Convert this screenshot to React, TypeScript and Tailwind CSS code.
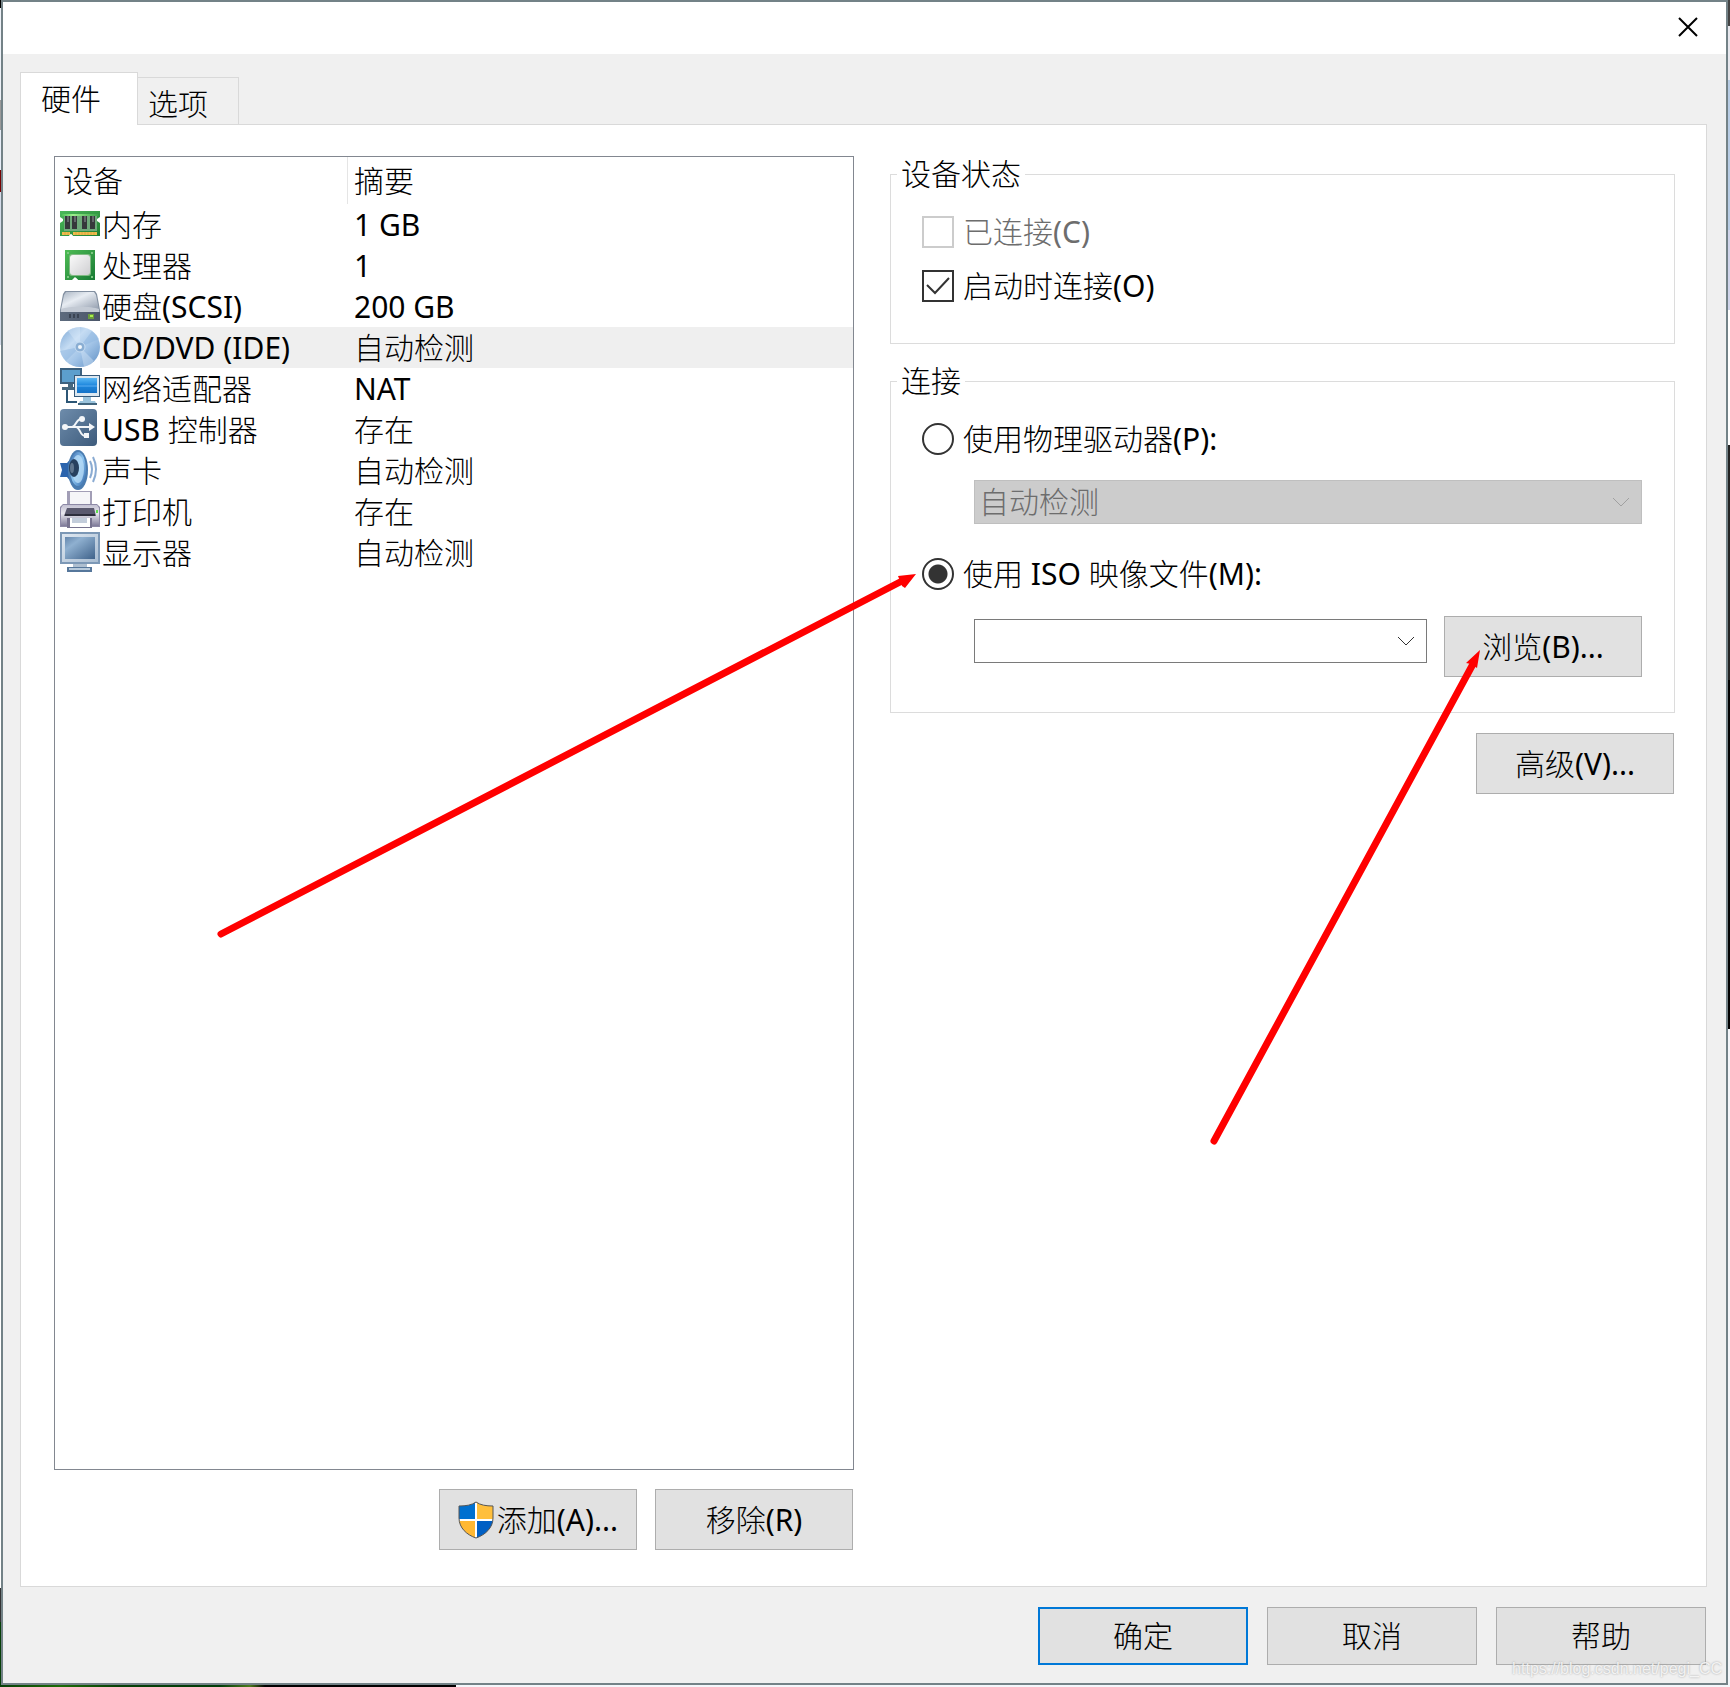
import { useState } from "react";
import type { ReactNode } from "react";

interface Device {
  id: string;
  name: string;
  summary: string;
  icon: ReactNode;
}

const MemoryIcon = () => (
  <svg width="40" height="40" viewBox="0 0 40 40">
    <defs>
      <linearGradient id="mem" x1="0" y1="0" x2="1" y2="1">
        <stop offset="0" stopColor="#4cb85a" />
        <stop offset="1" stopColor="#1f7f32" />
      </linearGradient>
      <linearGradient id="memTop" x1="0" y1="0" x2="1" y2="0">
        <stop offset="0" stopColor="#4dc057" />
        <stop offset="0.3" stopColor="#9ff08e" />
        <stop offset="1" stopColor="#3aa349" />
      </linearGradient>
    </defs>
    <path d="M0 7h40v6l-3 2v2l3 2v13H13l-2-2-2 2H0V19l3-2v-2l-3-2z" fill="url(#mem)" />
    <path d="M2 10h36v2H2z" fill="url(#memTop)" />
    <path d="M4 12h33v15H4z" fill="#6faa7b" />
    <g fill="#36383b">
      <path d="M5 12h5v13H5zM12 12h5v13h-5zM22 12h5v13h-5zM30 12h5v13h-5z" />
    </g>
    <g fill="#63666a">
      <path d="M7 12h2v6H7zM14 12h2v6h-2zM24 12h2v6h-2zM32 12h2v6h-2z" />
    </g>
    <path d="M2 28h8v3H2zM13 28h24v3H13z" fill="#efbd4c" />
    <path d="M5 28v3M8 28v3M16 28v3M19 28v3M22 28v3M25 28v3M28 28v3M31 28v3M34 28v3" stroke="#dba345" />
    <path d="m11 30 3 3H8z" fill="#fff" />
  </svg>
);

const CpuIcon = () => (
  <svg width="40" height="40" viewBox="0 0 40 40">
    <defs>
      <linearGradient id="cpu" x1="0" y1="0" x2="1" y2="1">
        <stop offset="0" stopColor="#4fbd55" />
        <stop offset="1" stopColor="#187a34" />
      </linearGradient>
      <linearGradient id="die" x1="0" y1="0" x2="1" y2="1">
        <stop offset="0" stopColor="#fafafa" />
        <stop offset="1" stopColor="#cfcfd2" />
      </linearGradient>
    </defs>
    <path d="M5 5h30v30H18l-2-2-2 2H5z" fill="url(#cpu)" />
    <path d="M7 7h2v2H7zM31 7h2v2h-2zM31 31h2v2h-2zM7 31h2v2H7z" fill="#7cc781" />
    <rect x="9" y="9" width="22" height="22" rx="3" fill="#7fba82" />
    <rect x="10" y="10" width="20" height="20" rx="3" fill="url(#die)" />
    <path d="m15 32 3 3h-6z" fill="#fff" />
  </svg>
);

const DiskIcon = () => (
  <svg width="40" height="40" viewBox="0 0 40 40">
    <defs>
      <linearGradient id="hdd" x1="0" y1="0" x2="1" y2="1">
        <stop offset="0" stopColor="#a9b4c2" />
        <stop offset="0.4" stopColor="#e7ecf2" />
        <stop offset="1" stopColor="#8f9aab" />
      </linearGradient>
      <linearGradient id="hddFront" x1="0" y1="0" x2="1" y2="0">
        <stop offset="0" stopColor="#5d6b7e" />
        <stop offset="1" stopColor="#4a5568" />
      </linearGradient>
    </defs>
    <path d="M5 5h30l2 3 3 16v11H0V24L3 8z" fill="#8390a1" />
    <path d="M6 6h28l2 3 3 15H1L4 9z" fill="url(#hdd)" />
    <path d="M1 23c8-3 30-3 38 0v3H1z" fill="#c3cad4" />
    <path d="M0 26h40v9H0z" fill="url(#hddFront)" />
    <path d="M9 28h2v4H9zM13 28h2v4h-2zM17 28h2v4h-2z" fill="#3a4453" />
    <path d="M28 28h6v5h-6z" fill="#6a9a3f" />
    <path d="M30 29h3v2h-3z" fill="#a8f04c" />
  </svg>
);

const DiscIcon = () => (
  <svg width="40" height="40" viewBox="0 0 40 40">
    <defs>
      <linearGradient id="disc" x1="0" y1="0" x2="1" y2="1">
        <stop offset="0" stopColor="#7aa6d4" />
        <stop offset="0.35" stopColor="#c5dcf3" />
        <stop offset="0.6" stopColor="#a2c4e7" />
        <stop offset="1" stopColor="#5f8fc4" />
      </linearGradient>
    </defs>
    <circle cx="20" cy="20" r="20" fill="url(#disc)" />
    <path d="M20 20 8 4a20 20 0 0 1 12-4zM20 20l14 14a20 20 0 0 1-10 6z" fill="#dcebfa" opacity="0.4" />
    <path d="M20 20 0 24a20 20 0 0 0 6 10zM20 20l19-8a20 20 0 0 0-7-8z" fill="#8db6e0" opacity="0.5" />
    <circle cx="20" cy="20" r="5" fill="#8aaed3" stroke="#c9def3" strokeWidth="1" />
    <circle cx="20" cy="20" r="2" fill="#f4f8fc" />
  </svg>
);

const NetworkIcon = () => (
  <svg width="40" height="40" viewBox="0 0 40 40">
    <defs>
      <linearGradient id="net" x1="0" y1="0" x2="0" y2="1">
        <stop offset="0" stopColor="#5bb8f5" />
        <stop offset="0.5" stopColor="#1c86dc" />
        <stop offset="1" stopColor="#1673c8" />
      </linearGradient>
    </defs>
    <path d="M0 0h22v16H0z" fill="#3c617f" />
    <path d="M2 2h18v12H2z" fill="#5c9fcd" />
    <path d="M8 16h5v4H8zM2 19h12v3H2z" fill="#47687f" />
    <path d="M7 22v12h10" fill="none" stroke="#2c5675" strokeWidth="2" />
    <path d="M14 7h26v22H14z" fill="#35597a" />
    <path d="M15 8h24v20H15z" fill="#dbe7f0" />
    <path d="M17 10h20v15H17z" fill="url(#net)" />
    <path d="M17 17h20v2H17z" fill="#54a9ef" opacity="0.6" />
    <path d="M23 29h8v4h4l2 4H18l2-4h3z" fill="#9ac3dc" />
    <path d="M18 35h19v2H18z" fill="#42667f" />
  </svg>
);

const UsbIcon = () => (
  <svg width="40" height="40" viewBox="0 0 40 40">
    <defs>
      <linearGradient id="usb" x1="0" y1="0" x2="1" y2="1">
        <stop offset="0" stopColor="#6e8cab" />
        <stop offset="1" stopColor="#3d5b7c" />
      </linearGradient>
    </defs>
    <rect width="37" height="37" rx="4" fill="url(#usb)" />
    <g fill="none" stroke="#f3f6f9" strokeWidth="2">
      <path d="M5 18h25M12 18c4 0 4-8 9-8M16 18c4 0 4 9 9 9" />
    </g>
    <circle cx="5" cy="18" r="3" fill="#f3f6f9" />
    <circle cx="22" cy="10" r="3" fill="#f3f6f9" />
    <path d="M24 24h5v5h-5zM29 14l6 4-6 4z" fill="#f3f6f9" />
  </svg>
);

const SoundIcon = () => (
  <svg width="40" height="40" viewBox="0 0 40 40">
    <defs>
      <linearGradient id="snd" x1="0" y1="0" x2="1" y2="1">
        <stop offset="0" stopColor="#3c6fb0" />
        <stop offset="0.5" stopColor="#8cc4f0" />
        <stop offset="1" stopColor="#2c62a5" />
      </linearGradient>
    </defs>
    <path d="M0 13h7L17 1v38L7 27H0l2-7z" fill="#2b64ad" />
    <ellipse cx="18" cy="20" rx="10" ry="20" fill="#4a7cb0" />
    <ellipse cx="18" cy="19" rx="8" ry="17" fill="url(#snd)" />
    <ellipse cx="18" cy="19" rx="6" ry="14" fill="#b6dcf7" opacity="0.8" />
    <ellipse cx="14" cy="18" rx="5" ry="9" fill="#27405f" />
    <ellipse cx="12" cy="18" rx="2" ry="5" fill="#60768f" />
    <path d="M30 11q4 8 0 17M33 7q6 12 0 25" fill="none" stroke="#8aabd2" strokeWidth="2" />
  </svg>
);

const PrinterIcon = () => (
  <svg width="40" height="40" viewBox="0 0 40 40">
    <defs>
      <linearGradient id="prn" x1="0" y1="0" x2="0" y2="1">
        <stop offset="0" stopColor="#c3c1d2" />
        <stop offset="0.4" stopColor="#e8e7ee" />
        <stop offset="1" stopColor="#7f7b99" />
      </linearGradient>
    </defs>
    <path d="M7 0h25v14H7z" fill="#a29eb6" />
    <path d="M10 1h20v13H10z" fill="#f5f5f8" />
    <path d="M3 13h34l3 3v20H0V16z" fill="#8d89a6" />
    <path d="M3 14h34l2 3v18H1V17z" fill="url(#prn)" />
    <path d="M7 17h27l2 8H4z" fill="#5a596e" />
    <path d="M5 23h30v2H5z" fill="#2e2f3d" />
    <path d="M36 19h2v3h-2z" fill="#5ee04d" />
    <path d="M7 27h25v10H7z" fill="#77738f" />
    <path d="M10 27h20v9H10z" fill="#fff" />
    <path d="M12 27h15v5H12z" fill="#c3cddb" />
  </svg>
);

const DisplayIcon = () => (
  <svg width="40" height="40" viewBox="0 0 40 40">
    <defs>
      <linearGradient id="dsp" x1="0" y1="0" x2="1" y2="1">
        <stop offset="0" stopColor="#6587ad" />
        <stop offset="0.3" stopColor="#8fb0d0" />
        <stop offset="1" stopColor="#3f628a" />
      </linearGradient>
      <linearGradient id="dspFrame" x1="0" y1="0" x2="1" y2="1">
        <stop offset="0" stopColor="#dfe8f1" />
        <stop offset="1" stopColor="#a9bdd2" />
      </linearGradient>
    </defs>
    <path d="M0 0h40v32H0z" fill="#7c98b6" />
    <path d="M2 2h36v28H2z" fill="url(#dspFrame)" />
    <path d="M5 5h30v22H5z" fill="url(#dsp)" />
    <path d="M13 32h14v3H13z" fill="#aebfd0" />
    <path d="M7 35h25v5H7z" fill="#56779b" />
    <path d="M9 36h21v2H9z" fill="#b9cbdc" />
  </svg>
);

const ShieldIcon = () => (
  <svg width="36" height="38" viewBox="0 0 36 38">
    <defs>
      <clipPath id="shieldClip">
        <path d="M18 1c4 3 10 4 17 4v12c0 10-8 17-17 20C9 34 1 27 1 17V5c7 0 13-1 17-4z" />
      </clipPath>
    </defs>
    <g clipPath="url(#shieldClip)">
      <path d="M0 0h18v19H0z" fill="#0070d0" />
      <path d="M18 0h18v19H18z" fill="#ffbf3c" />
      <path d="M0 19h18v19H0z" fill="#ffb833" />
      <path d="M18 19h18v19H18z" fill="#005fc4" />
      <path d="M18 0v38M0 19h36" stroke="#fff" strokeWidth="2" />
    </g>
    <path
      d="M18 1c4 3 10 4 17 4v12c0 10-8 17-17 20C9 34 1 27 1 17V5c7 0 13-1 17-4z"
      fill="none"
      stroke="#555"
    />
  </svg>
);

const Chevron = () => (
  <svg
    width="18"
    height="10"
    viewBox="0 0 18 10"
    fill="none"
    stroke="currentColor"
    className="pointer-events-none absolute right-3 top-1/2 -translate-y-1/2"
  >
    <path d="m1 1 8 8 8-8" />
  </svg>
);

const devices: Device[] = [
  { id: "memory", name: "内存", summary: "1 GB", icon: <MemoryIcon /> },
  { id: "cpu", name: "处理器", summary: "1", icon: <CpuIcon /> },
  { id: "disk", name: "硬盘(SCSI)", summary: "200 GB", icon: <DiskIcon /> },
  { id: "cd", name: "CD/DVD (IDE)", summary: "自动检测", icon: <DiscIcon /> },
  { id: "network", name: "网络适配器", summary: "NAT", icon: <NetworkIcon /> },
  { id: "usb", name: "USB 控制器", summary: "存在", icon: <UsbIcon /> },
  { id: "sound", name: "声卡", summary: "自动检测", icon: <SoundIcon /> },
  { id: "printer", name: "打印机", summary: "存在", icon: <PrinterIcon /> },
  { id: "display", name: "显示器", summary: "自动检测", icon: <DisplayIcon /> },
];

const buttonStyle =
  "flex h-[61px] w-[198px] shrink-0 items-center justify-center border border-[#adadad] bg-[#e1e1e1]";
const radioStyle =
  "size-8 shrink-0 appearance-none rounded-full border-2 border-[#333] checked:bg-[radial-gradient(circle,#333_9px,transparent_10px)]";

const DeviceTable = ({ selected, onSelect }: { selected: string; onSelect: (id: string) => void }) => (
  <table className="w-full table-fixed border-collapse text-left">
    <thead>
      <tr className="h-[47px]">
        <th className="w-[293px] p-0 font-normal">
          <div className="border-r border-[#e5e5e5] pl-2 leading-[47px]">设备</div>
        </th>
        <th className="p-0 pl-[6px] font-normal leading-[47px]">摘要</th>
      </tr>
    </thead>
    <tbody>
      {devices.map(({ id, name, summary, icon }) => (
        <tr key={id} className="h-[41px]" onClick={() => onSelect(id)}>
          <td className="p-0 pl-[5px]">
            <div className="flex h-[41px]">
              {icon}
              <span className={`flex-1 pl-[2px] leading-[41px] ${id === selected ? "bg-[#efefef]" : ""}`}>
                {name}
              </span>
            </div>
          </td>
          <td className={`p-0 pl-[6px] leading-[41px] ${id === selected ? "bg-[#efefef]" : ""}`}>{summary}</td>
        </tr>
      ))}
    </tbody>
  </table>
);

const Arrows = () => (
  <svg
    width="1730"
    height="1687"
    viewBox="0 0 1730 1687"
    className="pointer-events-none absolute left-0 top-0"
    fill="#f00"
  >
    <path d="M221 934 902 581M1214 1141 1473 664" stroke="#f00" strokeWidth="7" strokeLinecap="round" />
    <path d="m916 574-18 2 2 5 2 5 3 2zM1480 650l-14 13 5 1 3 2 3 2z" />
  </svg>
);

export default function App() {
  const [selected, setSelected] = useState("cd");
  const [source, setSource] = useState("iso");

  return (
    <div className="relative flex min-h-screen flex-col overflow-hidden bg-[#f4f6fa] font-['Noto_Sans','Noto_Sans_CJK_SC_Light','Noto_Sans_CJK_SC',sans-serif] text-[30px] font-normal leading-9 text-black">
      <div className="flex flex-1">
        <div className="w-px bg-[linear-gradient(#000_0_8px,#eef2f8_8px_100px,#999_100px_130px,#e8eef8_130px_170px,#700_170px_192px,#d5dcea_192px_345px,#fff_345px_1588px,#333_1588px_1622px,#063f06_1622px)]" />
        <div className="flex min-w-0 flex-1 flex-col border-2 border-[#738287] bg-[#f0f0f0]">
          <header className="flex h-[52px] justify-end bg-white">
            <button type="button" aria-label="关闭" className="flex w-[76px] items-center justify-center pb-0.5">
              <svg width="20" height="20" viewBox="0 0 20 20" stroke="#000" strokeWidth="2">
                <path d="m1 1 18 18M19 1 1 19" />
              </svg>
            </button>
          </header>

          <main className="flex flex-1 flex-col pb-[18px] pl-[17px] pr-[19px] pt-[18px]">
            <div role="tablist" className="flex items-end">
              <button
                type="button"
                role="tab"
                aria-selected="true"
                className="relative -mb-px h-[53px] w-[118px] border border-b-0 border-[#d9d9d9] bg-white pl-5 text-left"
              >
                硬件
              </button>
              <button
                type="button"
                role="tab"
                aria-selected="false"
                className="h-[47px] w-[101px] border border-b-0 border-l-0 border-[#d9d9d9] pl-[10px] pt-1.5 text-left"
              >
                选项
              </button>
            </div>

            <div className="grid flex-1 grid-cols-[800fr_785fr] gap-9 border border-[#d9d9d9] bg-white pb-9 pl-[33px] pr-[31px] pt-[31px]">
              <section className="flex flex-col">
                <div className="flex-1 border border-[#828790]">
                  <DeviceTable selected={selected} onSelect={setSelected} />
                </div>
                <div className="mt-[19px] flex justify-end gap-[18px] pr-px">
                  <button type="button" className={buttonStyle}>
                    <ShieldIcon />
                    <span className="pl-[3px]">添加(A)...</span>
                  </button>
                  <button type="button" className={buttonStyle}>移除(R)</button>
                </div>
              </section>

              <section>
                <fieldset className="border border-[#dcdcdc]">
                  <legend className="ml-[6px] px-1">设备状态</legend>
                  <div className="pb-[39px] pl-[31px] pt-[22px]">
                    <label className="flex items-center gap-[9px] text-[#6d6d6d]">
                      <input type="checkbox" disabled className="size-8 appearance-none border-2 border-[#ccc]" />
                      已连接(C)
                    </label>
                    <label className="relative mt-[18px] flex items-center gap-[9px]">
                      <input type="checkbox" defaultChecked className="peer size-8 appearance-none border-2 border-[#333]" />
                      <svg
                        width="32"
                        height="32"
                        viewBox="0 0 32 32"
                        className="pointer-events-none absolute left-0 hidden peer-checked:block"
                      >
                        <path d="m5 15 8 8L27 8" fill="none" stroke="#333" strokeWidth="2" />
                      </svg>
                      启动时连接(O)
                    </label>
                  </div>
                </fieldset>

                <fieldset className="mt-[19px] border border-[#dcdcdc]">
                  <legend className="ml-[6px] px-1">连接</legend>
                  <div className="pb-[35px] pl-[31px] pr-8 pt-[22px]">
                    <label className="flex items-center gap-[9px]">
                      <input
                        type="radio"
                        name="source"
                        checked={source === "physical"}
                        onChange={() => setSource("physical")}
                        className={radioStyle}
                      />
                      使用物理驱动器(P):
                    </label>
                    <div className="relative ml-[52px] mt-[23px] text-[#a0a0a0]">
                      <select
                        disabled
                        aria-label="物理驱动器"
                        className="block h-11 w-full appearance-none border border-[#bfbfbf] bg-[#ccc] pl-1 text-[#6d6d6d] opacity-100"
                      >
                        <option>自动检测</option>
                      </select>
                      <Chevron />
                    </div>
                    <label className="mt-8 flex items-center gap-[9px]">
                      <input
                        type="radio"
                        name="source"
                        checked={source === "iso"}
                        onChange={() => setSource("iso")}
                        className={radioStyle}
                      />
                      使用 ISO 映像文件(M):
                    </label>
                    <div className="ml-[52px] mt-6 flex gap-[17px]">
                      <div className="relative mt-[3px] h-11 flex-1 text-[#333]">
                        <select
                          aria-label="ISO 映像文件"
                          className="block h-11 w-full appearance-none border border-[#7a7a7a] bg-white pl-1"
                        >
                          <option></option>
                        </select>
                        <Chevron />
                      </div>
                      <button type="button" className={buttonStyle}>浏览(B)...</button>
                    </div>
                  </div>
                </fieldset>

                <div className="mt-5 flex justify-end pr-px">
                  <button type="button" className={buttonStyle}>高级(V)...</button>
                </div>
              </section>
            </div>

            <footer className="mt-5 flex justify-end gap-[19px] pr-px">
              <button type="button" className="h-[58px] w-[210px] border-2 border-[#0078d7] bg-[#e1e1e1]">
                确定
              </button>
              <button type="button" className="h-[58px] w-[210px] border border-[#adadad] bg-[#e1e1e1]">
                取消
              </button>
              <button type="button" className="h-[58px] w-[210px] border border-[#adadad] bg-[#e1e1e1]">
                帮助
              </button>
            </footer>
          </main>
        </div>
        <div className="w-0.5 bg-[linear-gradient(#444_0_26px,#e8e8ee_26px_80px,#b8cce4_80px_230px,#d0d4ea_230px_310px,#fff_310px_445px,#222_445px_680px,#000_680px_1029px,#f4f6fa_1029px)]" />
      </div>
      <div className="h-0.5 bg-[linear-gradient(90deg,#063f06_0,#1c6b06_60px,#063f06_120px,#003c08_220px,#4b7a1c_250px,#000_265px_456px,#f4f6fa_456px)]" />
      <Arrows />
      <span className="pointer-events-none absolute bottom-1.5 right-2 font-['Liberation_Sans',sans-serif] text-base leading-6 text-white/80 [text-shadow:0_0_2px_#999]">
        https://blog.csdn.net/pegi_CC
      </span>
    </div>
  );
}
